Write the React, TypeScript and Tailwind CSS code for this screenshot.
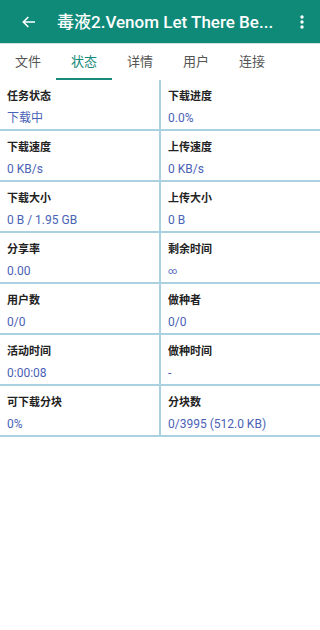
const cells: [string, string][][] = [
  [['任务状态', '下载中'], ['下载进度', '0.0%']],
  [['下载速度', '0 KB/s'], ['上传速度', '0 KB/s']],
  [['下载大小', '0 B / 1.95 GB'], ['上传大小', '0 B']],
  [['分享率', '0.00'], ['剩余时间', '∞']],
  [['用户数', '0/0'], ['做种者', '0/0']],
  [['活动时间', '0:00:08'], ['做种时间', '-']],
  [['可下载分块', '0%'], ['分块数', '0/3995 (512.0 KB)']],
];

const tabs = ['文件', '状态', '详情', '用户', '连接'];

const font = { fontFamily: 'Roboto, "Noto Sans CJK SC", sans-serif' };

const Cell = ({ label, value, left }: { label: string; value: string; left?: boolean }) => (
  <div
    className={`flex-1 pl-[7px] pt-[10px] ${left ? 'border-r-2 border-[#a9d1df]' : ''}`}
  >
    <p className="text-[11px] leading-[13px] font-bold text-[#222]">{label}</p>
    <p
      className={`mt-[8px] leading-[14px] text-[#4a62b6] ${
        value === '∞' ? 'text-[9px]' : 'text-[12px]'
      }`}
    >
      {value}
    </p>
  </div>
);

export default function App() {
  return (
    <div className="w-[320px] h-[630px] bg-white" style={font}>
      <div className="h-[43px] bg-[#0f8a79] flex items-center text-white">
        <div className="w-[57px] flex justify-center pl-[1px]">
          <svg width="16" height="16" viewBox="0 0 24 24" fill="none" stroke="white" strokeWidth="2.4">
            <path d="M21 12H4M11 4.5 3.5 12l7.5 7.5" />
          </svg>
        </div>
        <p className="flex-1 text-[17px] font-medium leading-[22px] whitespace-nowrap overflow-hidden">
          毒液2.Venom Let There Be...
        </p>
        <div className="w-[36px] flex justify-center">
          <svg width="4" height="14" viewBox="0 0 4 14" fill="white">
            <circle cx="2" cy="2" r="1.7" />
            <circle cx="2" cy="7" r="1.7" />
            <circle cx="2" cy="12" r="1.7" />
          </svg>
        </div>
      </div>
      <div className="h-px bg-[#cfe2e0]" />
      <div className="flex h-[36px]">
        {tabs.map((t, i) => (
          <div key={t} className="w-[56px] flex flex-col">
            <div
              className={`flex-1 flex items-center justify-center pt-[2px] text-[13px] ${
                i === 1 ? 'text-[#168a7a]' : 'text-[#555]'
              }`}
            >
              {t}
            </div>
            <div className={`h-[2px] ${i === 1 ? 'bg-[#1a8a7c]' : ''}`} />
          </div>
        ))}
      </div>
      <div>
        {cells.map((row, r) => (
          <div key={r} className="flex h-[51px] border-b-2 border-[#a9d1df]">
            <Cell label={row[0][0]} value={row[0][1]} left />
            <Cell label={row[1][0]} value={row[1][1]} />
          </div>
        ))}
      </div>
    </div>
  );
}
